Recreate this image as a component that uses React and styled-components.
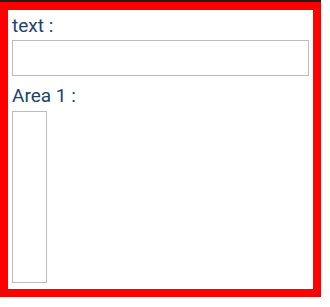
import styled, { createGlobalStyle } from "styled-components"

const Global = createGlobalStyle`
body {
margin: 0;
background: #fff;
font-family: Roboto, "Liberation Sans", sans-serif;
}
`

const Frame = styled.div`
width: 321px;
border-top: 2px solid #1e1e1e;
`

const Box = styled.form`
box-sizing: border-box;
height: 295px;
border: 8px solid #ff0000;
padding: 4px;
display: flex;
flex-direction: column;
`

const Label = styled.label`
display: block;
font-size: 19px;
line-height: 23px;
color: #23416b;
margin-top: ${p => p.$spaced ? "8px" : "0"};
margin-bottom: ${p => p.$spaced ? "4px" : "3px"};
`

const TextInput = styled.input`
box-sizing: border-box;
width: 297px;
height: 36px;
border: 1px solid #bcbcbc;
padding: 2px 4px;
font: inherit;
outline: none;
`

const TextArea = styled.textarea`
box-sizing: border-box;
width: 35px;
height: 172px;
border: 1px solid #bcbcbc;
resize: none;
outline: none;
padding: 2px;
`

export default function App() {
    return (
        <>
            <Global />
            <Frame>
                <Box onSubmit={e => e.preventDefault()}>
                    <Label htmlFor="text">text :</Label>
                    <TextInput id="text" type="text" />
                    <Label htmlFor="area1" $spaced>Area 1 :</Label>
                    <TextArea id="area1" />
                </Box>
            </Frame>
        </>
    )
}
